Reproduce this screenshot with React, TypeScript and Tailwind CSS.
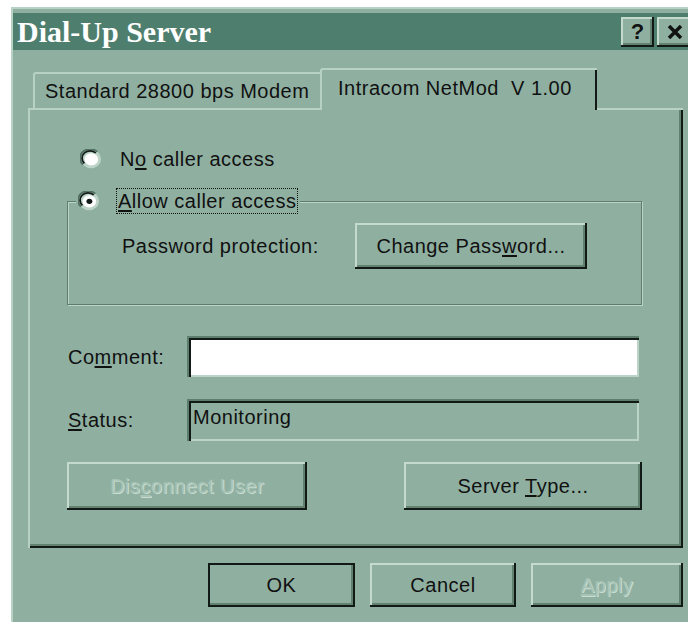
import React from "react";

const FACE = "bg-[#8fb0a1]";
const raised =
  "shadow-[inset_-2px_-2px_0_#111a16,inset_2px_2px_0_#c3dacd,inset_-4px_-4px_0_#62826f]";
const sunken =
  "shadow-[inset_2px_2px_0_#5d7d6d,inset_4px_4px_0_#111a16,inset_-2px_-2px_0_#bcd4c8]";

function Radio({ checked }: { checked?: boolean }) {
  return (
    <svg width="22" height="20" viewBox="0 0 12 12" preserveAspectRatio="none" className="shrink-0">
      <circle cx="6" cy="6" r="5.5" fill="#bcd4c8" />
      <path d="M1.6 9.4 A5.5 5.5 0 0 1 9.4 1.6" stroke="#4f6e60" strokeWidth="1" fill="none" />
      <path d="M2.4 8.6 A4.3 4.3 0 0 1 8.6 2.4" stroke="#111a16" strokeWidth="1" fill="none" />
      <circle cx="6.2" cy="6.2" r="3.7" fill="#ffffff" />
      {checked && <circle cx="6.2" cy="6.2" r="1.6" fill="#111a16" />}
    </svg>
  );
}

function Button({
  children,
  className = "",
  disabled,
  isDefault,
}: {
  children: React.ReactNode;
  className?: string;
  disabled?: boolean;
  isDefault?: boolean;
}) {
  return (
    <div
      className={`${FACE} ${raised} flex items-center justify-center ${
        isDefault ? "outline-2 outline-[#111a16] -outline-offset-2" : ""
      } ${
        disabled
          ? "text-[#a7c3b6] [text-shadow:1px_1px_0_#c9ddd2]"
          : "text-[#111]"
      } ${className}`}
    >
      <span>{children}</span>
    </div>
  );
}

export default function App() {
  return (
    <div
      className="w-[688px] h-[622px] overflow-hidden bg-white pl-[11px] pt-[7px] text-[20px] tracking-[0.5px] leading-none"
      style={{ fontFamily: '"Liberation Sans", Arial, sans-serif' }}
    >
      {/* window frame */}
      <div className={`${FACE} w-[700px] h-[640px] border-l-2 border-t-2 border-[#b8d1c5] pt-[4px] flex flex-col`}>
        {/* title bar */}
        <div className="w-[682px] h-[37px] bg-[#4e7e6d] flex items-center justify-between pl-[4px] pr-[3px]">
          <span
            className="text-white text-[30px] font-bold tracking-normal"
            style={{ fontFamily: '"Liberation Serif", "Times New Roman", serif' }}
          >
            Dial-Up Server
          </span>
          <div className="flex gap-[3px]">
            <div className={`${FACE} ${raised} w-[33px] h-[30px] flex items-center justify-center text-[22px] font-bold text-[#111] tracking-normal`}>
              ?
            </div>
            <div className={`${FACE} ${raised} w-[35px] h-[30px] flex items-center justify-center`}>
              <svg width="16" height="14" viewBox="0 0 16 14">
                <path d="M2 1 L14 13 M14 1 L2 13" stroke="#111" strokeWidth="3.5" />
              </svg>
            </div>
          </div>
        </div>

        {/* tabs + panel */}
        <div className="pl-[15px] pt-[18px] flex flex-col">
          <div className="flex items-end pl-[5px] h-[40px] relative z-10">
            <div className="w-[287px] h-[36px] border-l-2 border-t-2 border-[#b8d1c5] rounded-tl-[3px] pl-[10px] flex items-center text-[#111]">
              Standard 28800 bps Modem
            </div>
            <div className={`${FACE} w-[277px] h-[42px] -mb-[2px] border-l-2 border-t-2 border-[#b8d1c5] rounded-tl-[3px] shadow-[inset_-2px_0_0_#111a16] pl-[16px] pb-[4px] flex items-center text-[#111]`}>
              Intracom NetMod&nbsp; V 1.00
            </div>
          </div>

          <div className="w-[655px] h-[440px] border-l-2 border-t-2 border-[#b8d1c5] shadow-[inset_-2px_-2px_0_#111a16,inset_-4px_-4px_0_#62826f] pl-[37px] pr-[41px] flex flex-col text-[#111]">
            {/* no caller access */}
            <div className="mt-[38px] h-[22px] flex items-center pl-[13px] gap-[18px]">
              <Radio />
              <span>
                N<span className="underline underline-offset-2">o</span> caller access
              </span>
            </div>

            {/* allow caller access group */}
            <fieldset className="mt-[20px] h-[115px] border border-[#5d7d6d] shadow-[1px_1px_0_#bcd4c8,inset_1px_1px_0_#bcd4c8] px-0 pb-0">
              <legend className={`${FACE} ml-[8px] px-[2px] flex items-center gap-[16px] h-[22px]`}>
                <Radio checked />
                <span className="border border-dotted border-[#111] px-[1px] py-[2px]">
                  <span className="underline underline-offset-2">A</span>llow caller access
                </span>
              </legend>
              <div className="flex items-center pl-[54px] mt-[11px]">
                <span className="w-[233px]">Password protection:</span>
                <Button className="w-[232px] h-[46px]">
                  Change Pass<span className="underline underline-offset-2">w</span>ord...
                </Button>
              </div>
            </fieldset>

            {/* comment */}
            <div className="mt-[31px] flex items-center">
              <span className="w-[120px] pl-[1px]">
                Co<span className="underline underline-offset-2">m</span>ment:
              </span>
              <div className={`bg-white ${sunken} w-[452px] h-[41px]`} />
            </div>

            {/* status */}
            <div className="mt-[22px] flex items-center">
              <span className="w-[120px] pl-[1px]">
                <span className="underline underline-offset-2">S</span>tatus:
              </span>
              <div className={`${sunken} w-[452px] h-[42px] pl-[6px] pb-[6px] flex items-center`}>
                Monitoring
              </div>
            </div>

            {/* action buttons */}
            <div className="mt-[21px] flex justify-between">
              <Button disabled className="w-[240px] h-[48px]">
                Dis<span className="underline underline-offset-2">c</span>onnect User
              </Button>
              <Button className="w-[238px] h-[48px]">
                Server <span className="underline underline-offset-2">T</span>ype...
              </Button>
            </div>
          </div>

          {/* dialog buttons */}
          <div className="mt-[15px] pl-[180px] flex gap-[15px]">
            <Button isDefault className="w-[147px] h-[44px]">OK</Button>
            <Button className="w-[146px] h-[44px]">Cancel</Button>
            <Button disabled className="w-[152px] h-[44px]">
              <span className="underline underline-offset-2">A</span>pply
            </Button>
          </div>
        </div>
      </div>
    </div>
  );
}
